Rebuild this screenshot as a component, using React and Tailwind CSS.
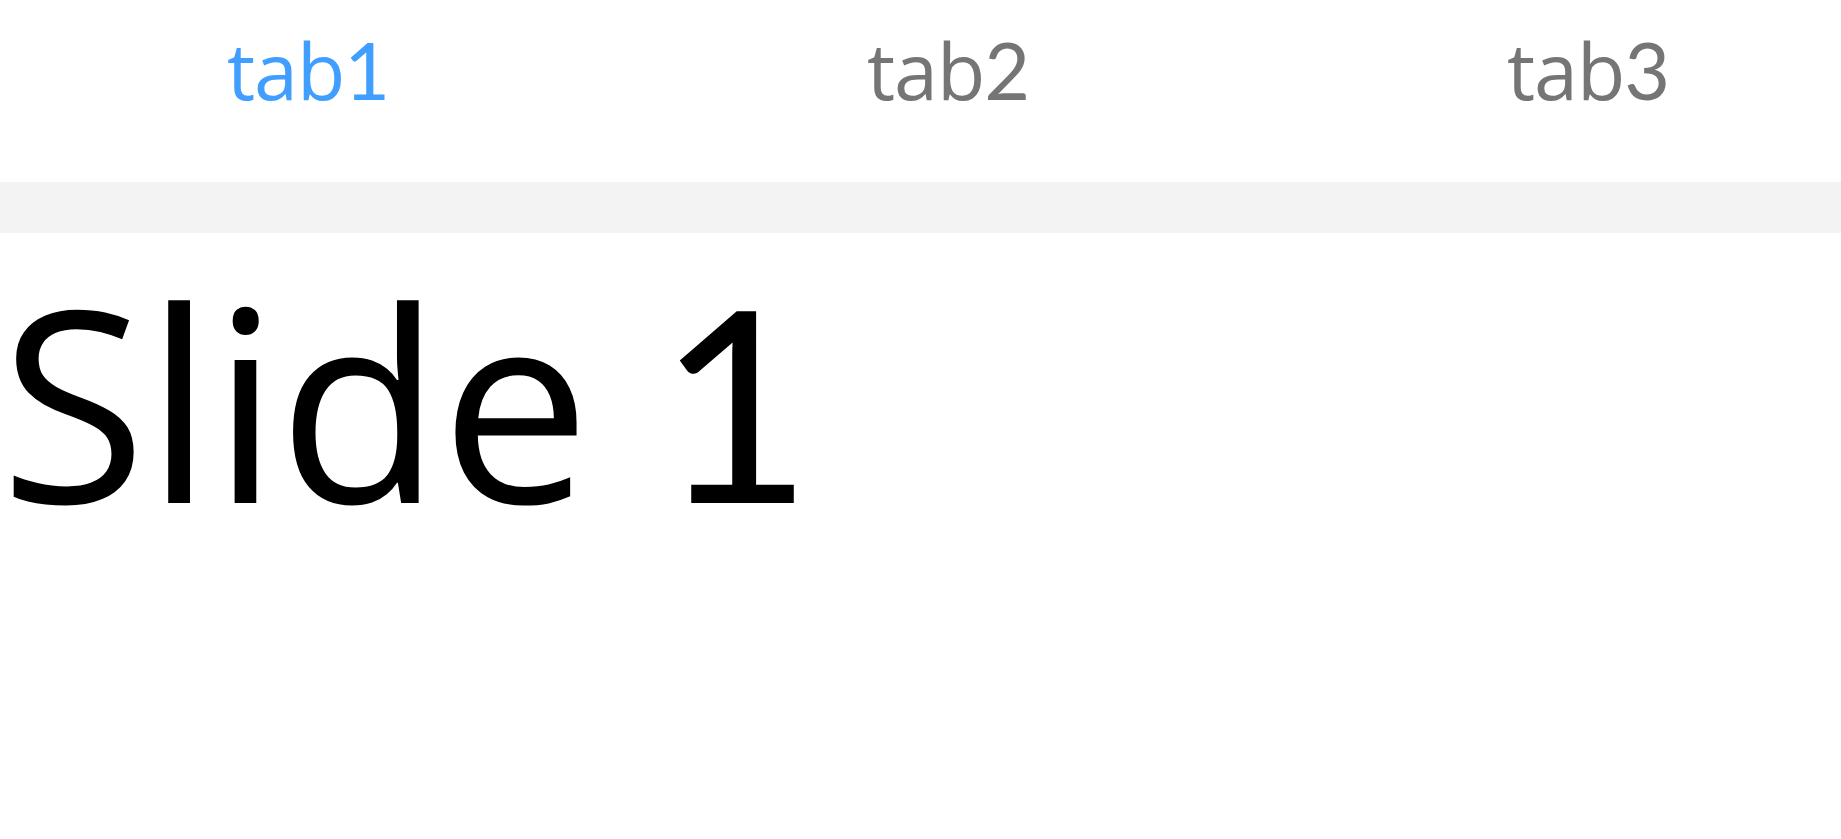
import React, { useState } from "react";

const tabs = ["1", "2", "3"];

// digits in Lato: its "1" has the flat foot the reference shows
const Digit = ({ children }) => (
  <span style={{ fontFamily: "Lato, sans-serif" }}>{children}</span>
);

export default function App() {
  const [active, setActive] = useState(0);

  return (
    <div
      className="w-full h-[839px] overflow-hidden bg-white"
      style={{ fontFamily: '"Open Sans", "Noto Sans", sans-serif' }}
    >
      {/* Tab bar */}
      <div className="flex h-[182px] -ml-[12px]">
        {tabs.map((n, i) => (
          <button
            key={n}
            onClick={() => setActive(i)}
            className={
              "w-[640px] shrink-0 flex justify-center items-start pt-[30px] text-[79px] leading-none tracking-[-1px] " +
              (active === i ? "text-[#409eff]" : "text-[#757575]")
            }
          >
            <span>
              tab<Digit>{n}</Digit>
            </span>
          </button>
        ))}
      </div>

      {/* Divider band */}
      <div className="h-[51px] bg-[#f3f3f3]" />

      {/* Slide */}
      <div className="pt-[33px]">
        <h1 className="text-[267px] leading-none font-normal text-black tracking-[-1px] whitespace-nowrap">
          Slide <Digit>{active + 1}</Digit>
        </h1>
      </div>
    </div>
  );
}
